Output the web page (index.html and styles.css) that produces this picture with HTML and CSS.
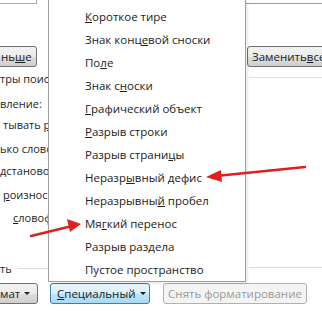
FILE: index.html
```html
<!DOCTYPE html>
<html lang="ru">
<head>
  <meta charset="UTF-8" />
  <title>Найти и заменить</title>
  <link rel="stylesheet" href="styles.css">
</head>
<body>
  <div class="dialog">
    <div class="main">
      <!-- left part of the dialog, cut off by the menu -->
      <div class="left">
        <div class="topBox"></div>
        <button class="btn lessBtn">нь<u>ш</u>е</button>
        <div class="label l1">тры поиска</div>
        <div class="label l2">вление:</div>
        <div class="label l3">тывать <u>р</u>егистр</div>
        <div class="label l4">ько слово целиком</div>
        <div class="label l5"><u>д</u>становочные знаки</div>
        <div class="label l6"><u>р</u>оизносится как</div>
        <div class="label l7"><u>с</u>ловоформы</div>
        <div class="group"><span>ть</span><i class="rule"></i></div>
      </div>

      <!-- right part of the dialog -->
      <div class="right">
        <div class="fieldEdge"></div>
        <button class="btn replaceAll">Заменить <u>в</u>се</button>
        <div class="thinRule"></div>
        <div class="groupRule"></div>
      </div>
    </div>

    <div class="bottom">
      <button class="btn formatBtn">мат <i class="caret"></i></button>
      <button class="btn btnActive"><u>С</u>пециальный <i class="caret"></i></button>
      <button class="btn" disabled>Снять форматирование</button>
    </div>

    <!-- dropdown menu of "Специальный" -->
    <ul class="menu">
      <li><u>К</u>ороткое тире</li>
      <li>Знак конц<u>е</u>вой сноски</li>
      <li>По<u>л</u>е</li>
      <li>Знак с<u>н</u>оски</li>
      <li><u>Г</u>рафический объект</li>
      <li><u>Р</u>азрыв строки</li>
      <li>Разрыв страни<u>ц</u>ы</li>
      <li>Неразр<u>ы</u>вный дефис</li>
      <li>Неразрывны<u>й</u> пробел</li>
      <li>Мя<u>г</u>кий перенос</li>
      <li>Разрыв раздела</li>
      <li>Пустое пространство</li>
    </ul>

    <svg class="arrows" width="322" height="311" viewBox="0 0 322 311">
      <g fill="none" stroke="#e0201c" stroke-width="2.4" stroke-linecap="round">
        <line x1="305" y1="167" x2="216" y2="176" />
        <line x1="31" y1="236" x2="72" y2="226" />
      </g>
      <g fill="#e0201c">
        <polygon points="206,177 221,170 222,182" />
        <polygon points="81,224 67,219 70,232" />
      </g>
    </svg>
  </div>
</body>
</html>
```

FILE: styles.css
```css
body {
  margin: 0;
  background-color: #ffffff;
  font-family: 'Open Sans', 'DejaVu Sans', sans-serif;
  font-size: 11px;
  color: #1e1e1e;
}

.dialog {
  position: relative;
  width: 322px;
  height: 311px;
  overflow: hidden;
  background-color: #ffffff;
}

.main {
  display: flex;
  height: 282px;
}

.left {
  width: 48px;
  white-space: nowrap;
  overflow: hidden;
}

.topBox {
  width: 36px;
  height: 3px;
  border-right: 1px solid #a9a9a9;
  border-bottom: 1px solid #a9a9a9;
}

.btn {
  font-family: inherit;
  font-size: 11.5px;
  color: #1e1e1e;
  height: 21px;
  padding: 0 6px;
  border: 1px solid #707070;
  border-radius: 3px;
  background-image: linear-gradient(#f2f2f2 0%, #ebebeb 50%, #dddddd 51%, #cfcfcf 100%);
  white-space: nowrap;
  display: flex;
  align-items: center;
  flex-shrink: 0;
}

.btn:disabled {
  border-color: #adb2b5;
  background-image: none;
  background-color: #f4f4f4;
  color: #9a9a9a;
}

.btnActive {
  border-color: #3c7fb1;
  background-image: linear-gradient(#eaf6fd 0%, #d9f0fc 50%, #bee6fd 51%, #a7d9f5 100%);
}

.lessBtn {
  margin-top: 42px;
  margin-left: -4px;
  width: 41px;
  padding-left: 4px;
}

.label {
  line-height: 23px;
  height: 23px;
}

.l1 { height: 25px; }
.l2 { height: 21px; }
.l3 { height: 24px; padding-left: 3px; }
.l4 { height: 22px; }
.l5 { height: 24px; }
.l6 { height: 23px; padding-left: 3px; }
.l7 { height: 23px; padding-left: 13px; }

.group {
  margin-top: 31px;
  display: flex;
  align-items: center;
  height: 16px;
}

.rule {
  flex: 1;
  height: 1px;
  margin-left: 6px;
  background-color: #dcdcdc;
}

.right {
  margin-left: auto;
  width: 76px;
}

.fieldEdge {
  height: 3px;
  border-bottom: 1px solid #9c9c9c;
}

.replaceAll {
  margin-top: 42px;
  margin-left: 1px;
  width: 90px;
  padding-left: 4px;
}

.thinRule {
  margin-top: 10px;
  margin-left: 3px;
  height: 1px;
  background-color: #e2e2e2;
}

.groupRule {
  margin-top: 189px;
  margin-left: 3px;
  height: 1px;
  background-color: #dcdcdc;
}

.bottom {
  display: flex;
  margin-top: 1px;
}

.formatBtn {
  margin-left: -4px;
  width: 42px;
  padding-left: 3px;
}

.bottom .btn:nth-child(2) {
  margin-left: 12px;
  width: 100px;
  padding-left: 6px;
}

.bottom .btn:nth-child(3) {
  margin-left: 13px;
  width: 144px;
  justify-content: center;
}

.caret {
  display: inline-block;
  margin-left: 4px;
  border-left: 3px solid transparent;
  border-right: 3px solid transparent;
  border-top: 3px solid #1e1e1e;
}

.menu {
  position: absolute;
  left: 48px;
  top: -1px;
  width: 196px;
  height: 276px;
  margin: 0;
  padding: 5px 0 0 0;
  list-style: none;
  background-color: #ffffff;
  border: 1px solid #a0a0a0;
  box-shadow: 2px 2px 2px rgba(0, 0, 0, 0.08);
}

.menu li {
  height: 23px;
  line-height: 23px;
  padding-left: 36px;
  font-size: 11.5px;
  color: #222222;
  white-space: nowrap;
}

.arrows {
  position: absolute;
  left: 0;
  top: 0;
  pointer-events: none;
}
```
